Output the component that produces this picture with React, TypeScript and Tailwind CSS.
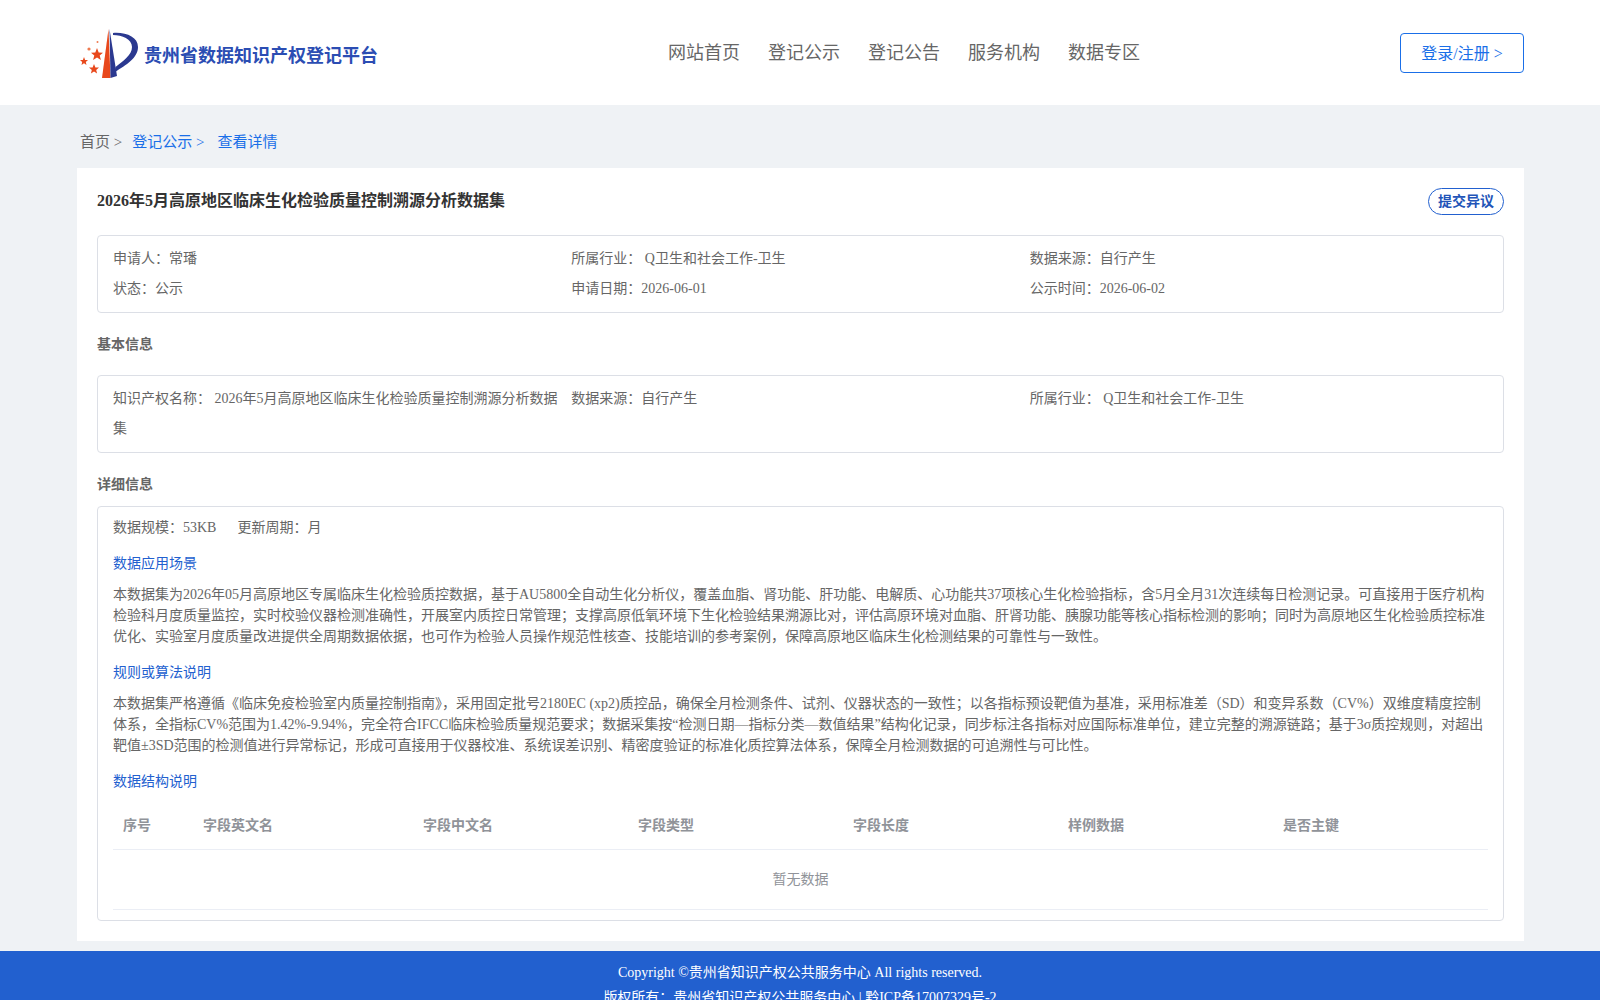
import React from "react";

const font = { fontFamily: '"Liberation Serif", "Noto Sans CJK SC", serif' };

const columns = [
  { name: "序号", width: "w-[80px]" },
  { name: "字段英文名", width: "w-[220px]" },
  { name: "字段中文名", width: "w-[215px]" },
  { name: "字段类型", width: "w-[215px]" },
  { name: "字段长度", width: "w-[215px]" },
  { name: "样例数据", width: "w-[215px]" },
  { name: "是否主键", width: "w-[215px]" },
];

function Logo() {
  return (
    <svg width="60" height="52" viewBox="80 27 60 52" className="shrink-0">
      <path d="M108.5 28 L102 77 L110.5 77 Z" fill="#e8481c" />
      <path d="M109.5 28 L110.5 77 L117 75 Z" fill="#2b3990" />
      <path d="M113 32 C126 31 138 36 138 46 C138 57 126 64 115 71 L115.5 66 C123 60 132 54 132 46 C132 38 122 34 113 34 Z" fill="#2b3990" />
      <polygon points="97,47 98.7,51.5 103,51.7 99.7,54.6 100.9,59 97,56.5 93.1,59 94.3,54.6 91,51.7 95.3,51.5" fill="#e8481c" />
      <polygon points="84,56 85.1,58.9 88,59 85.8,61 86.5,64 84,62.3 81.5,64 82.2,61 80,59 82.9,58.9" fill="#e8481c" />
      <polygon points="94,63 95.4,66.4 99,66.6 96.2,69 97.1,72.5 94,70.5 90.9,72.5 91.8,69 89,66.6 92.6,66.4" fill="#e8481c" />
      <circle cx="89" cy="48" r="1.6" fill="#ee7a50" />
      <circle cx="97.5" cy="41" r="1" fill="#ee7a50" />
    </svg>
  );
}

function Header() {
  return (
    <header className="flex h-[105px] items-center bg-white pl-[80px] pr-[76px]">
      <div className="flex w-[588px] items-center gap-[4px] pt-[2px]">
        <Logo />
        <span className="pt-[5px] text-[18px] font-bold text-[#2b4db3]">贵州省数据知识产权登记平台</span>
      </div>
      <nav className="flex gap-[28px] pt-[2px] text-[18px] text-[#666]">
        <a>网站首页</a>
        <a>登记公示</a>
        <a>登记公告</a>
        <a>服务机构</a>
        <a>数据专区</a>
      </nav>
      <button className="ml-auto h-[40px] w-[124px] rounded-[4px] border border-[#1a6fe8] pt-[2px] text-[16px] text-[#1a6fe8]">
        登录/注册 &gt;
      </button>
    </header>
  );
}

function Breadcrumb() {
  return (
    <div className="flex h-[63px] items-center pl-[3px] pt-[12px] text-[15px] text-[#666]">
      <span>首页 &gt;</span>
      <span className="ml-[10px] text-[#1a6fe8]">登记公示 &gt;</span>
      <span className="ml-[13px] text-[#1a6fe8]">查看详情</span>
    </div>
  );
}

function Details() {
  return (
    <div className="rounded-[4px] border border-[#dcdfe6] px-[15px] pb-[10px] text-[14px] text-[#666]">
      <div className="flex h-[41px] items-center gap-[21px]">
        <span>数据规模：53KB</span>
        <span>更新周期：月</span>
      </div>
      <h4 className="mt-[5px] text-[14px] leading-[21px] text-[#2260cf]">数据应用场景</h4>
      <p className="mt-[10px] leading-[21px]">
        本数据集为2026年05月高原地区专属临床生化检验质控数据，基于AU5800全自动生化分析仪，覆盖血脂、肾功能、肝功能、电解质、心功能共37项核心生化检验指标，含5月全月31次连续每日检测记录。可直接用于医疗机构检验科月度质量监控，实时校验仪器检测准确性，开展室内质控日常管理；支撑高原低氧环境下生化检验结果溯源比对，评估高原环境对血脂、肝肾功能、胰腺功能等核心指标检测的影响；同时为高原地区生化检验质控标准优化、实验室月度质量改进提供全周期数据依据，也可作为检验人员操作规范性核查、技能培训的参考案例，保障高原地区临床生化检测结果的可靠性与一致性。
      </p>
      <h4 className="mt-[15px] text-[14px] leading-[21px] text-[#2260cf]">规则或算法说明</h4>
      <p className="mt-[10px] leading-[21px]">
        本数据集严格遵循《临床免疫检验室内质量控制指南》，采用固定批号2180EC (xp2)质控品，确保全月检测条件、试剂、仪器状态的一致性；以各指标预设靶值为基准，采用标准差（SD）和变异系数（CV%）双维度精度控制体系，全指标CV%范围为1.42%-9.94%，完全符合IFCC临床检验质量规范要求；数据采集按“检测日期—指标分类—数值结果”结构化记录，同步标注各指标对应国际标准单位，建立完整的溯源链路；基于3σ质控规则，对超出靶值±3SD范围的检测值进行异常标记，形成可直接用于仪器校准、系统误差识别、精密度验证的标准化质控算法体系，保障全月检测数据的可追溯性与可比性。
      </p>
      <h4 className="mt-[15px] text-[14px] leading-[21px] text-[#2260cf]">数据结构说明</h4>
      <div className="mt-[10px]">
        <div className="flex h-[48px] items-center border-b border-[#ebeef5] font-bold text-[#909399]">
          {columns.map((c) => (
            <div key={c.name} className={`${c.width} px-[10px]`}>
              {c.name}
            </div>
          ))}
        </div>
        <div className="flex h-[60px] items-center justify-center border-b border-[#ebeef5] text-[#909399]">暂无数据</div>
      </div>
    </div>
  );
}

export default function App() {
  return (
    <div className="min-h-[1000px] bg-[#eff2f5]" style={font}>
      <Header />
      <main className="ml-[77px] mr-[76px]">
        <Breadcrumb />
        <section className="bg-white px-[20px] pb-[20px] pt-[20px]">
          <div className="flex items-start justify-between">
            <h1 className="pt-[1px] text-[16px] font-bold leading-[24px] text-[#333]">
              2026年5月高原地区临床生化检验质量控制溯源分析数据集
            </h1>
            <button className="h-[27px] w-[76px] rounded-[14px] border border-[#2260cf] text-[14px] font-bold text-[#2254b8]">
              提交异议
            </button>
          </div>
          <div className="mt-[20px] grid grid-cols-3 rounded-[4px] border border-[#dcdfe6] px-[15px] pb-[8.5px] pt-[7.5px] text-[14px] leading-[30px] text-[#666]">
            <div>申请人：常璠</div>
            <div>所属行业： Q卫生和社会工作-卫生</div>
            <div>数据来源：自行产生</div>
            <div>状态：公示</div>
            <div>申请日期：2026-06-01</div>
            <div>公示时间：2026-06-02</div>
          </div>
          <h3 className="mt-[20px] text-[14px] font-bold leading-[24px] text-[#666]">基本信息</h3>
          <div className="mt-[18px] grid grid-cols-3 rounded-[4px] border border-[#dcdfe6] px-[15px] py-[8px] text-[14px] leading-[30px] text-[#666]">
            <div className="pr-[12px]">知识产权名称： 2026年5月高原地区临床生化检验质量控制溯源分析数据集</div>
            <div>数据来源：自行产生</div>
            <div>所属行业： Q卫生和社会工作-卫生</div>
          </div>
          <h3 className="mt-[20px] text-[14px] font-bold leading-[24px] text-[#666]">详细信息</h3>
          <div className="mt-[9px]">
            <Details />
          </div>
        </section>
      </main>
      <footer className="mt-[10px] bg-[#2260cf] pt-[9px] text-center text-[14px] leading-[25px] text-white">
        <div>Copyright ©贵州省知识产权公共服务中心 All rights reserved.</div>
        <div>版权所有：贵州省知识产权公共服务中心 | 黔ICP备17007329号-2</div>
      </footer>
    </div>
  );
}
